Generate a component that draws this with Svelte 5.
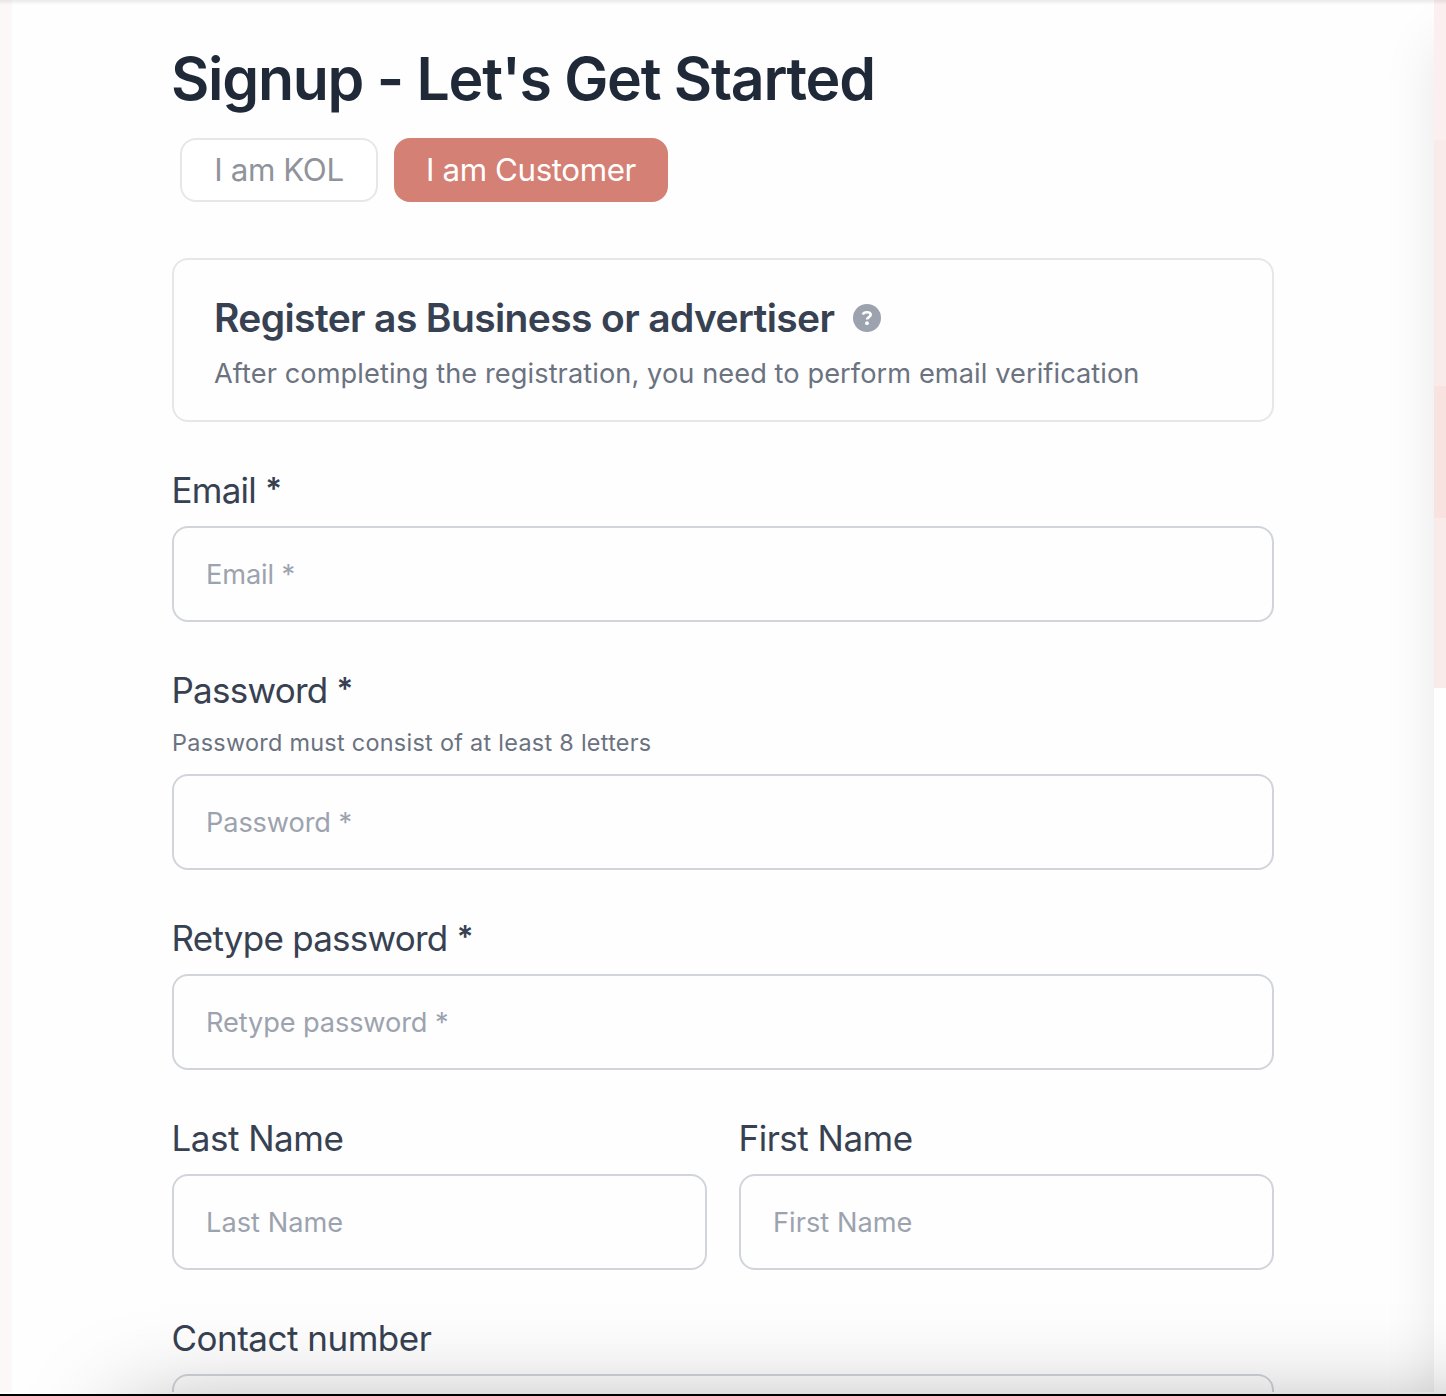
<script lang="ts">
  const roles = [
    { id: 'kol', label: 'I am KOL' },
    { id: 'customer', label: 'I am Customer' }
  ];
  let role = $state('customer');
</script>

{#snippet field(id: string, label: string, type: string, required: boolean, hint: string)}
  <div class="field {id}">
    <label for={id}>{label}{#if required}{' '}<span class="star">*</span>{/if}</label>
    {#if hint}<p class="hint">{hint}</p>{/if}
    <input {id} {type} placeholder={required ? `${label} *` : label} />
  </div>
{/snippet}

<div class="page">
  <div class="rail"></div>
  <main>
    <h1>Signup - Let's Get Started</h1>
    <div class="roles">
      {#each roles as r}
        <button class={r.id} class:active={role === r.id} onclick={() => (role = r.id)}>{r.label}</button>
      {/each}
    </div>
    <section class="card">
      <h2>
        <span>Register as Business or advertiser</span>
        <svg viewBox="0 0 28 28" width="28" height="28" aria-hidden="true">
          <circle cx="14" cy="14" r="14" fill="#9ca3af" />
          <path d="M9.8 10.4C10.4 8.9 11.8 8.3 13.9 8.3C16.3 8.3 17.7 9.2 17.7 10.8C17.7 13.2 14 12.9 14 15.6" fill="none" stroke="#fff" stroke-width="2.6" />
          <circle cx="14" cy="19.2" r="1.9" fill="#fff" />
        </svg>
      </h2>
      <p>After completing the registration, you need to perform email verification</p>
    </section>
    <form>
      {@render field('email', 'Email', 'email', true, '')}
      {@render field('password', 'Password', 'password', true, 'Password must consist of at least 8 letters')}
      {@render field('retype', 'Retype password', 'password', true, '')}
      <div class="names">
        {@render field('last', 'Last Name', 'text', false, '')}
        {@render field('first', 'First Name', 'text', false, '')}
      </div>
      {@render field('contact', 'Contact number', 'tel', false, '')}
    </form>
  </main>
  <aside>
    <div class="one"></div>
    <div class="two"></div>
    <div class="three"></div>
    <div class="four"></div>
  </aside>
  <div class="side-shadow"><div></div></div>
  <div class="top-shadow"></div>
  <div class="bottom-gap"></div>
  <div class="bottom-shadow"></div>
  <div class="bottom-edge"></div>
</div>

<style>
  :global(body) { overflow: hidden; background: #fff; }
  * { box-sizing: border-box; margin: 0; }
  .page {
    position: relative;
    display: grid;
    grid-template-columns: 12px 1fr 12px;
    height: 1396px;
    overflow: hidden;
    background: #fefefe;
    color: #374151;
    font-family: Inter, "Liberation Sans", sans-serif;
  }
  .rail { background: #fcf8f7; }
  main { padding: 43px 160px 0; min-width: 0; }
  h1 {
    color: #1f2937;
    font-size: 59px;
    line-height: 72px;
    font-weight: 600;
    letter-spacing: -1.27px;
    text-indent: -1px;
    white-space: nowrap;
  }
  .roles { display: flex; gap: 16px; padding: 23px 8px 56px; }
  button {
    height: 64px;
    padding: 1px 0 0;
    border: 2px solid #e5e7eb;
    border-radius: 16px;
    background: #fff;
    color: #8f939b;
    font: 400 31.3px/59px Inter, "Liberation Sans", sans-serif;
    letter-spacing: -0.4px;
    white-space: nowrap;
  }
  .kol { width: 198px; }
  .customer { width: 274px; }
  button.active { border-color: #d48075; background: #d48075; color: #fff; }
  .card {
    height: 164px;
    padding: 29px 40px 0;
    border: 2px solid #e5e7eb;
    border-radius: 16px;
  }
  h2 {
    display: flex;
    align-items: center;
    gap: 19px;
    height: 56px;
    font-size: 39px;
    font-weight: 600;
    letter-spacing: -0.63px;
    white-space: nowrap;
  }
  h2 svg { position: relative; top: 1px; }
  .card p {
    margin-top: 9px;
    color: #6b7280;
    font-size: 27.2px;
    line-height: 40px;
    letter-spacing: 0.08px;
    white-space: nowrap;
  }
  form { display: flex; flex-direction: column; gap: 40px; padding-top: 40px; }
  .names { display: grid; grid-template-columns: 1fr 1fr; gap: 32px; }
  label {
    display: block;
    height: 56px;
    margin-bottom: 8px;
    font-size: 35px;
    line-height: 56px;
    letter-spacing: -0.75px;
    text-indent: -0.5px;
    white-space: nowrap;
  }
  .last label, .first label, .contact label { letter-spacing: -0.5px; }
  .star { position: relative; top: -3px; font-size: 31px; font-weight: 600; line-height: 1; }
  .hint {
    margin-bottom: 16px;
    padding-top: 1px;
    color: #6b7280;
    font-size: 23.4px;
    line-height: 31px;
    letter-spacing: 0.29px;
    white-space: nowrap;
  }
  input {
    display: block;
    width: 100%;
    height: 96px;
    padding: 0 32px;
    border: 2px solid #d1d5db;
    border-radius: 16px;
    background: transparent;
    font: 400 27.2px Inter, "Liberation Sans", sans-serif;
    letter-spacing: -0.12px;
  }
  .last input, .first input { letter-spacing: 0.03px; }
  input::placeholder { color: #9ca3af; opacity: 1; }
  .contact input::placeholder { color: transparent; }
  aside { display: flex; flex-direction: column; background: #fefefe; }
  .one { height: 140px; background: #fbf0ef; }
  .two { height: 246px; background: #f8ebe9; }
  .three { height: 132px; background: #f8e3e1; }
  .four { height: 170px; background: #f9ebe9; }
  .side-shadow {
    position: absolute;
    inset: 0 12px 0 auto;
    width: 80px;
    overflow: hidden;
    pointer-events: none;
  }
  .side-shadow div {
    position: absolute;
    top: 40px;
    left: 80px;
    width: 200px;
    height: 1600px;
    box-shadow: 0 0 50px rgba(0, 0, 0, 0.09);
  }
  .top-shadow {
    position: absolute;
    inset: 0 0 auto;
    height: 5px;
    background: linear-gradient(rgba(0, 0, 0, 0.08), transparent);
  }
  .bottom-gap { position: absolute; inset: auto 0 2px; height: 2px; background: #fefefe; }
  .bottom-shadow {
    position: absolute;
    top: 1418px;
    left: 126px;
    width: 1600px;
    height: 800px;
    box-shadow: 0 0 94px rgba(0, 0, 0, 0.38);
    pointer-events: none;
  }
  .bottom-edge { position: absolute; inset: auto 0 0; height: 2px; background: #000; }
</style>
